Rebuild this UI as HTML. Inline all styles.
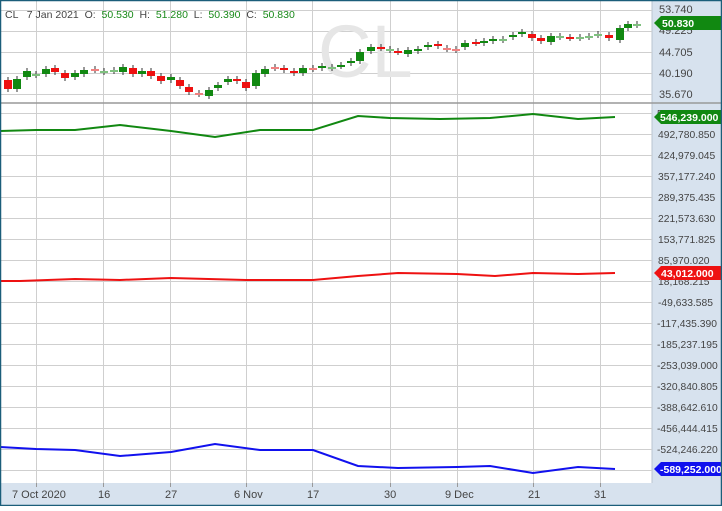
<!DOCTYPE html>
<html><head><style>
body{margin:0;width:722px;height:506px;overflow:hidden;background:#fff;font-family:"Liberation Sans",sans-serif}
</style></head><body>
<svg width="722" height="506" xmlns="http://www.w3.org/2000/svg" font-family="Liberation Sans, sans-serif">
<rect x="0" y="0" width="722" height="506" fill="#fff"/>
<rect x="652" y="0" width="70" height="506" fill="#d7e2ee"/>
<rect x="0" y="483" width="722" height="23" fill="#d7e2ee"/>
<line x1="652" y1="0" x2="652" y2="483" stroke="#b8c4d0"/>
<g stroke="#cfcfcf" stroke-width="1">
<line x1="36.5" y1="0" x2="36.5" y2="483"/><line x1="103.5" y1="0" x2="103.5" y2="483"/><line x1="170.5" y1="0" x2="170.5" y2="483"/><line x1="246.5" y1="0" x2="246.5" y2="483"/><line x1="312.5" y1="0" x2="312.5" y2="483"/><line x1="390.5" y1="0" x2="390.5" y2="483"/><line x1="457.5" y1="0" x2="457.5" y2="483"/><line x1="533.5" y1="0" x2="533.5" y2="483"/><line x1="600.5" y1="0" x2="600.5" y2="483"/>
<line x1="0" y1="10.5" x2="652" y2="10.5"/><line x1="0" y1="31.5" x2="652" y2="31.5"/><line x1="0" y1="52.5" x2="652" y2="52.5"/><line x1="0" y1="73.5" x2="652" y2="73.5"/><line x1="0" y1="94.5" x2="652" y2="94.5"/>
<line x1="0" y1="113.5" x2="652" y2="113.5"/><line x1="0" y1="134.5" x2="652" y2="134.5"/><line x1="0" y1="155.5" x2="652" y2="155.5"/><line x1="0" y1="176.5" x2="652" y2="176.5"/><line x1="0" y1="197.5" x2="652" y2="197.5"/><line x1="0" y1="218.5" x2="652" y2="218.5"/><line x1="0" y1="239.5" x2="652" y2="239.5"/><line x1="0" y1="260.5" x2="652" y2="260.5"/><line x1="0" y1="281.5" x2="652" y2="281.5"/><line x1="0" y1="302.5" x2="652" y2="302.5"/><line x1="0" y1="323.5" x2="652" y2="323.5"/><line x1="0" y1="344.5" x2="652" y2="344.5"/><line x1="0" y1="365.5" x2="652" y2="365.5"/><line x1="0" y1="386.5" x2="652" y2="386.5"/><line x1="0" y1="407.5" x2="652" y2="407.5"/><line x1="0" y1="428.5" x2="652" y2="428.5"/><line x1="0" y1="449.5" x2="652" y2="449.5"/><line x1="0" y1="470.5" x2="652" y2="470.5"/>
</g>
<g stroke="#999"><line x1="36.5" y1="483" x2="36.5" y2="487"/><line x1="103.5" y1="483" x2="103.5" y2="487"/><line x1="170.5" y1="483" x2="170.5" y2="487"/><line x1="246.5" y1="483" x2="246.5" y2="487"/><line x1="312.5" y1="483" x2="312.5" y2="487"/><line x1="390.5" y1="483" x2="390.5" y2="487"/><line x1="457.5" y1="483" x2="457.5" y2="487"/><line x1="533.5" y1="483" x2="533.5" y2="487"/><line x1="600.5" y1="483" x2="600.5" y2="487"/></g>
<line x1="0" y1="103" x2="722" y2="103" stroke="#999" stroke-width="1.5"/>
<text x="318" y="77" font-size="74" fill="#e6e6e6">CL</text>
<text x="5" y="18" font-size="10.5" fill="#444">CL  &#160; 7 Jan 2021 &#160;O: <tspan fill="#1a8a1a">&#160;50.530</tspan> &#160;H: <tspan fill="#1a8a1a">&#160;51.280</tspan> &#160;L: <tspan fill="#1a8a1a">&#160;50.390</tspan> &#160;C: <tspan fill="#1a8a1a">&#160;50.830</tspan></text>
<g id="c"></g>
<polyline fill="none" stroke="#118811" stroke-width="2" points="0,131 36,130 75,130 120,125 171,131 215,137 260,130 313,130 358,116 390,118 440,119 490,118 533,114 578,119 615,117"/>
<polyline fill="none" stroke="#ee1111" stroke-width="2" points="0,281 20,281 75,279 120,280 171,278 246,280 313,280 358,276 398,273 457,274 495,276 533,273 578,274 615,273"/>
<polyline fill="none" stroke="#1111ee" stroke-width="2" points="0,447 36,449 75,450 120,456 171,452 215,444 260,450 313,450 358,466 398,468 457,467 490,466 533,473 578,467 615,469"/>
<g font-size="11" fill="#444">
<text x="659" y="13">53.740</text><text x="659" y="34">49.225</text><text x="659" y="56">44.705</text><text x="659" y="77">40.190</text><text x="659" y="98">35.670</text>
</g>
<g font-size="10.3" fill="#444">
<text x="657" y="117">560,582.655</text><text x="658" y="138">492,780.850</text><text x="658" y="159">424,979.045</text><text x="658" y="180">357,177.240</text><text x="658" y="201">289,375.435</text><text x="658" y="222">221,573.630</text><text x="658" y="243">153,771.825</text><text x="658" y="264">85,970.020</text><text x="658" y="285">18,168.215</text><text x="658" y="306">-49,633.585</text><text x="657" y="327">-117,435.390</text><text x="657" y="348">-185,237.195</text><text x="657" y="369">-253,039.000</text><text x="657" y="390">-320,840.805</text><text x="657" y="411">-388,642.610</text><text x="657" y="432">-456,444.415</text><text x="657" y="453">-524,246.220</text>
</g>
<g font-size="11" fill="#444">
<text x="12" y="498">7 Oct 2020</text><text x="98" y="498">16</text><text x="165" y="498">27</text><text x="234" y="498">6 Nov</text><text x="307" y="498">17</text><text x="384" y="498">30</text><text x="445" y="498">9 Dec</text><text x="528" y="498">21</text><text x="594" y="498">31</text>
</g>
<g fill="#118811"><path d="M654 23 L661 16 H721 V30 H661 Z"/><path d="M654 117 L661 110 H721 V124 H661 Z"/></g>
<path d="M654 273 L661 266 H721 V280 H661 Z" fill="#ee1111"/>
<path d="M654 469 L661 462 H721 V476 H661 Z" fill="#1111ee"/>
<g font-size="10.5" fill="#fff" font-weight="bold"><text x="662" y="27">50.830</text><text x="660" y="121">546,239.000</text><text x="661" y="277">43,012.000</text><text x="660" y="473">-589,252.000</text></g>
<rect x="0.5" y="0.5" width="721" height="505" fill="none" stroke="#1b5e7a" stroke-width="1.5"/>
</svg>
<script>
var d=[[8,80,89,'r'],[17,79,89,'g'],[27,71,77,'g'],[36,74,75,'lg'],[46,69,74,'g'],[55,68,72,'r'],[65,73,78,'r'],[75,73,77,'g'],[84,70,74,'g'],[95,69,70,'p'],[104,71,72,'lg'],[114,70,71,'lg'],[123,67,72,'g'],[133,68,74,'r'],[142,71,74,'g'],[151,71,76,'r'],[161,76,81,'r'],[171,77,80,'g'],[180,80,86,'r'],[189,87,92,'r'],[199,93,94,'p'],[209,90,96,'g'],[218,85,88,'g'],[228,79,82,'g'],[237,79,81,'r'],[246,82,88,'r'],[256,73,86,'g'],[265,69,74,'g'],[275,67,68,'p'],[284,68,70,'r'],[294,71,73,'r'],[303,68,73,'g'],[313,68,69,'p'],[322,66,68,'g'],[332,67,68,'lg'],[341,65,66,'g'],[351,61,63,'g'],[360,52,61,'g'],[371,47,51,'g'],[381,47,48,'r'],[390,49,50,'lg'],[398,51,52,'r'],[408,50,54,'g'],[418,49,51,'g'],[428,45,47,'g'],[438,44,46,'r'],[447,48,49,'p'],[456,49,50,'p'],[465,43,47,'g'],[476,42,43,'r'],[484,41,43,'g'],[493,39,41,'g'],[503,39,40,'lg'],[513,35,37,'g'],[522,32,34,'g'],[532,34,38,'r'],[541,38,41,'r'],[551,36,42,'g'],[560,36,37,'lg'],[570,37,38,'r'],[580,37,38,'lg'],[589,36,37,'lg'],[598,34,35,'lg'],[609,35,38,'r'],[620,28,40,'g'],[628,24,28,'g'],[637,24,25,'lg']];
var col={r:'#ee1111',g:'#118811',lg:'#7fc07f',p:'#f08080'};
var s='';d.forEach(function(c){var x=c[0],t=c[1],b=c[2];s+='<line x1="'+x+'" x2="'+x+'" y1="'+(t-3)+'" y2="'+(b+3)+'" stroke="#333" stroke-width="1"/>';s+='<rect x="'+(x-4)+'" y="'+t+'" width="8" height="'+Math.max(2,b-t)+'" fill="'+col[c[3]]+'"/>';});
document.getElementById('c').innerHTML=s;
</script>
</body></html>
